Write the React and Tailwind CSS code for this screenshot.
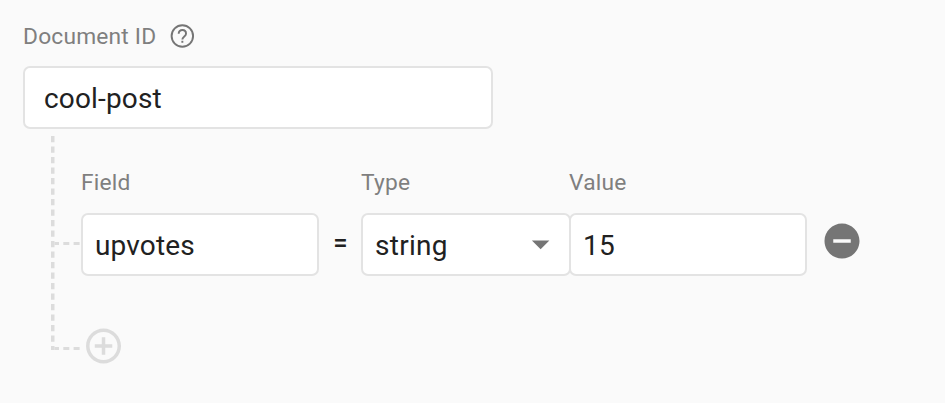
import React from "react";

const FieldLabel = ({ children, className }) => (
  <span className={`block pt-px text-[22.75px] leading-[28px] tracking-[0.2px] text-[#7f7f7f] ${className}`}>{children}</span>
);

const Box = ({ children, className }) => (
  <div
    className={`box-border flex h-[63px] shrink-0 items-center rounded-[7px] border-2 border-[#e3e3e3] bg-white text-[28px] leading-[32px] tracking-[0.15px] text-[#212121] ${className}`}
  >
    {children}
  </div>
);

const HelpIcon = () => (
  <svg className="size-7 shrink-0" viewBox="0 0 24 24" fill="none" stroke="#757575" strokeWidth="1.65">
    <circle cx="12.3" cy="12" r="9.2" />
    <path d="M9.15 10C9.15 8.2 10.5 6.85 12.3 6.85S15.45 8.2 15.45 10C15.45 12.3 12.3 12.4 12.3 15" />
    <path d="M12.3 16.1V17.8" />
  </svg>
);

const RemoveIcon = () => (
  <svg className="size-[42px] shrink-0" viewBox="0 0 24 24" fill="#757575">
    <path d="M12 2C6.48 2 2 6.48 2 12s4.48 10 10 10 10-4.48 10-10S17.52 2 12 2zm5 11H7v-2h10v2z" />
  </svg>
);

const AddIcon = () => (
  <svg className="size-[42px] shrink-0" viewBox="-0.3 0 24 24" fill="#dcdcdc">
    <path d="M13 7h-2v4H7v2h4v4h2v-4h4v-2h-4V7zm-1-5C6.48 2 2 6.48 2 12s4.48 10 10 10 10-4.48 10-10S17.52 2 12 2zm0 18c-4.41 0-8-3.59-8-8s3.59-8 8-8 8 3.59 8 8-3.59 8-8 8z" />
  </svg>
);

const ArrowIcon = () => (
  <svg className="mb-[4px] size-[42px] shrink-0" viewBox="0.2 0 24 24" fill="#757575">
    <path d="M7 10l5 5 5-5z" />
  </svg>
);

// Dashed branch lines that join the document to its fields.
const Branches = () => (
  <svg className="h-[214px] w-[30px] shrink-0" viewBox="0 0 30 214" fill="none" stroke="#dcdcdc">
    <path d="M1.75 0V214" strokeWidth="3.5" strokeDasharray="6.2 4.3" />
    <path d="M3.5 107.5H29" strokeWidth="3" strokeDasharray="6 4.3" strokeDashoffset="1.5" />
    <path d="M3.5 212.5H29" strokeWidth="3" strokeDasharray="6 4.3" strokeDashoffset="1.5" />
  </svg>
);

export default function App() {
  return (
    <main className="h-[403px] w-[945px] overflow-hidden bg-[#fafafa] pl-[23px] pt-[22px] font-[Roboto,sans-serif]">
      <div className="flex h-7 items-center">
        <FieldLabel className="w-[145px]">Document ID</FieldLabel>
        <HelpIcon />
      </div>
      <Box className="mt-4 w-[470px] pl-[19px] pt-[2px]">cool-post</Box>
      <div className="mt-[7px] flex pl-7">
        <Branches />
        <div className="pt-8">
          <div className="flex">
            <FieldLabel className="w-[280px]">Field</FieldLabel>
            <FieldLabel className="w-[208px]">Type</FieldLabel>
            <FieldLabel>Value</FieldLabel>
          </div>
          <div className="mt-4 flex">
            <Box className="w-[238px] pl-3 pt-[2px]">upvotes</Box>
            <span className="w-[42px] pl-px pt-[14px] text-center text-[25.5px] leading-[32px] font-medium text-[#212121]">=</span>
            <Box className="w-[210px] justify-between pl-3 pr-[7px] pt-[2px]">
              <span className="tracking-[0.3px]">string</span>
              <ArrowIcon />
            </Box>
            <Box className="-ml-[2px] w-[238px] pl-3 pt-[2px]">15</Box>
            <div className="pl-[14px] pt-[7px]">
              <RemoveIcon />
            </div>
          </div>
          <div className="mt-[49px] pl-px">
            <AddIcon />
          </div>
        </div>
      </div>
    </main>
  );
}
